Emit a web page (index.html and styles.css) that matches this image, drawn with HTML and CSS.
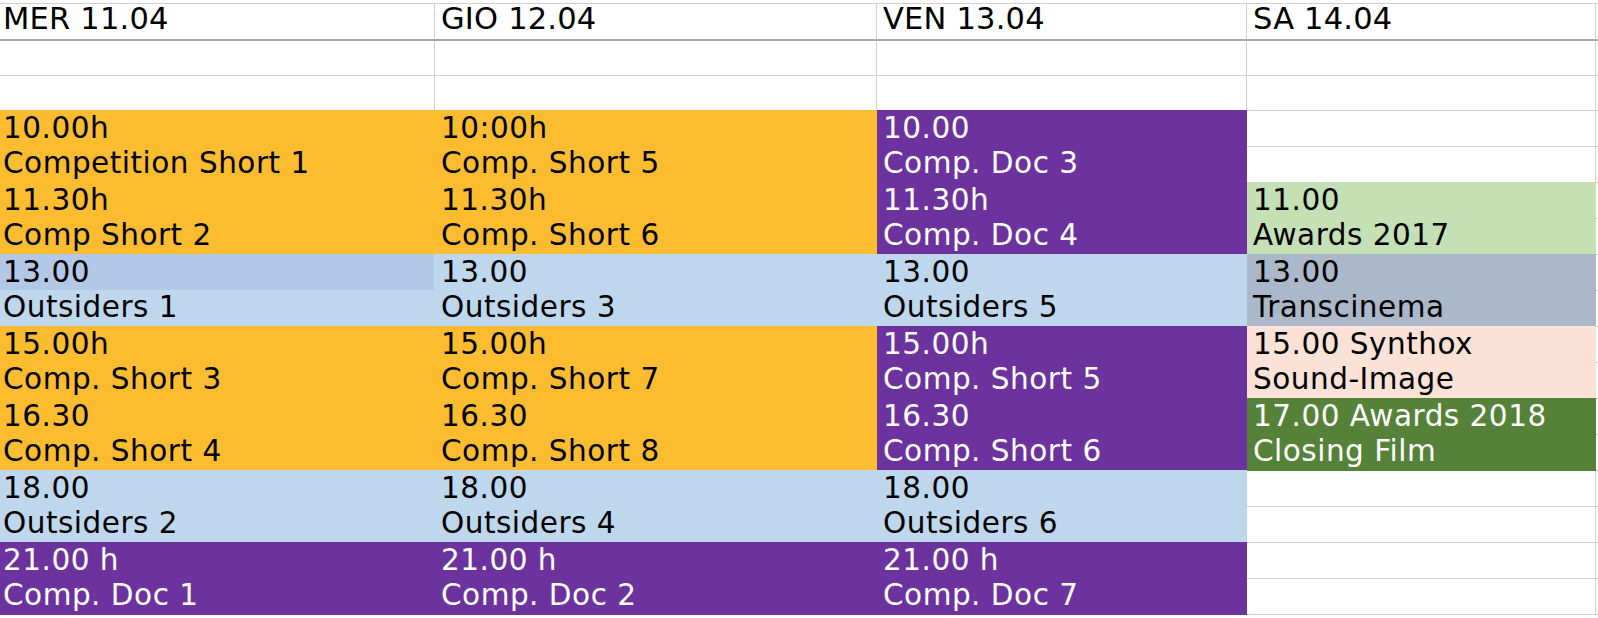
FILE: index.html
```html
<!DOCTYPE html>
<html lang="it">
<head>
<meta charset="utf-8">
<title>Programma</title>
<link rel="stylesheet" href="styles.css">
</head>
<body>
<div class="sheet">
  <div class="cell head c1"><span class="ln">MER 11.04</span></div>
  <div class="cell head"><span class="ln">GIO 12.04</span></div>
  <div class="cell head"><span class="ln">VEN 13.04</span></div>
  <div class="cell head"><span class="ln">SA 14.04</span></div>
  <div class="cell head edge"></div>

  <div class="cell"></div><div class="cell"></div><div class="cell"></div><div class="cell"></div><div class="cell edge"></div>
  <div class="cell"></div><div class="cell"></div><div class="cell"></div><div class="cell"></div><div class="cell edge"></div>

  <div class="cell ev yellow c1"><span class="ln">10.00h</span><span class="ln">Competition Short 1</span></div>
  <div class="cell ev yellow"><span class="ln">10:00h</span><span class="ln">Comp. Short 5</span></div>
  <div class="cell ev purple"><span class="ln">10.00</span><span class="ln">Comp. Doc 3</span></div>
  <div class="cell"></div><div class="cell edge"></div>
  <div class="cell"></div><div class="cell edge"></div>

  <div class="cell ev yellow c1"><span class="ln">11.30h</span><span class="ln">Comp Short 2</span></div>
  <div class="cell ev yellow"><span class="ln">11.30h</span><span class="ln">Comp. Short 6</span></div>
  <div class="cell ev purple"><span class="ln">11.30h</span><span class="ln">Comp. Doc 4</span></div>
  <div class="cell ev lgreen"><span class="ln">11.00</span><span class="ln">Awards 2017</span></div>
  <div class="cell edge"></div>
  <div class="cell edge"></div>

  <div class="cell ev blue c1"><span class="ln dark">13.00</span><span class="ln">Outsiders 1</span></div>
  <div class="cell ev blue"><span class="ln">13.00</span><span class="ln">Outsiders 3</span></div>
  <div class="cell ev blue"><span class="ln">13.00</span><span class="ln">Outsiders 5</span></div>
  <div class="cell ev slate"><span class="ln">13.00</span><span class="ln">Transcinema</span></div>
  <div class="cell edge"></div>
  <div class="cell edge"></div>

  <div class="cell ev yellow c1"><span class="ln">15.00h</span><span class="ln">Comp. Short 3</span></div>
  <div class="cell ev yellow"><span class="ln">15.00h</span><span class="ln">Comp. Short 7</span></div>
  <div class="cell ev purple"><span class="ln">15.00h</span><span class="ln">Comp. Short 5</span></div>
  <div class="cell ev pink"><span class="ln">15.00 Synthox</span><span class="ln">Sound-Image</span></div>
  <div class="cell edge"></div>
  <div class="cell edge"></div>

  <div class="cell ev yellow c1"><span class="ln">16.30</span><span class="ln">Comp. Short 4</span></div>
  <div class="cell ev yellow"><span class="ln">16.30</span><span class="ln">Comp. Short 8</span></div>
  <div class="cell ev purple"><span class="ln">16.30</span><span class="ln">Comp. Short 6</span></div>
  <div class="cell ev dgreen"><span class="ln">17.00 Awards 2018</span><span class="ln">Closing Film</span></div>
  <div class="cell edge"></div>
  <div class="cell edge"></div>

  <div class="cell ev blue c1"><span class="ln">18.00</span><span class="ln">Outsiders 2</span></div>
  <div class="cell ev blue"><span class="ln">18.00</span><span class="ln">Outsiders 4</span></div>
  <div class="cell ev blue"><span class="ln">18.00</span><span class="ln">Outsiders 6</span></div>
  <div class="cell"></div><div class="cell edge"></div>
  <div class="cell"></div><div class="cell edge"></div>

  <div class="cell ev purple c1"><span class="ln">21.00 h</span><span class="ln">Comp. Doc 1</span></div>
  <div class="cell ev purple"><span class="ln">21.00 h</span><span class="ln">Comp. Doc 2</span></div>
  <div class="cell ev purple"><span class="ln">21.00 h</span><span class="ln">Comp. Doc 7</span></div>
  <div class="cell"></div><div class="cell edge"></div>
  <div class="cell"></div><div class="cell edge"></div>
</div>
</body>
</html>
```

FILE: styles.css
```css
html, body {
  margin: 0;
  padding: 0;
  background: #ffffff;
}

body {
  font-family: "DejaVu Sans", Verdana, sans-serif;
  font-size: 29.5px;
  letter-spacing: 0.5px;
  color: #000000;
  overflow: hidden;
}

.sheet {
  margin-top: 3px;
  border-top: 1px solid #cfcfcf;
  display: grid;
  grid-template-columns: 435px 442px 370px 349px 2px;
  grid-template-rows: 37px 35px 35px repeat(14, 36px);
}

.cell {
  border-right: 1px solid #d0d0d0;
  border-bottom: 1px solid #d0d0d0;
  min-width: 0;
}

.cell.edge {
  border-right: none;
}

.cell.head {
  border-bottom: 2px solid #a6a6a6;
}

.ln {
  display: block;
  height: 35px;
  line-height: 35px;
  padding-left: 6px;
  white-space: nowrap;
}

.c1 .ln {
  padding-left: 3px;
}

.head .ln {
  font-size: 30.5px;
  letter-spacing: 0.2px;
  height: 35px;
  line-height: 29px;
}

.ev {
  grid-row: span 2;
  margin-top: -1px;
}

.ev .ln:first-child {
  height: 36px;
  line-height: 36px;
}

.yellow {
  background: #fbbd2f;
  border-color: #fbbd2f;
}

.purple {
  background: #6c339e;
  border-color: #6c339e;
  color: #ffffff;
}

.blue {
  background: #bed7ec;
  border-color: #bed7ec;
}

.ln.dark {
  background: #b3c7e6;
}

.lgreen {
  background: #c6e0b5;
  border-color: #c6e0b5;
}

.slate {
  background: #abb8c9;
  border-color: #abb8c9;
}

.pink {
  background: #fbe2d6;
  border-color: #fbe2d6;
}

.dgreen {
  background: #558238;
  border-color: #558238;
  color: #ffffff;
}
```
